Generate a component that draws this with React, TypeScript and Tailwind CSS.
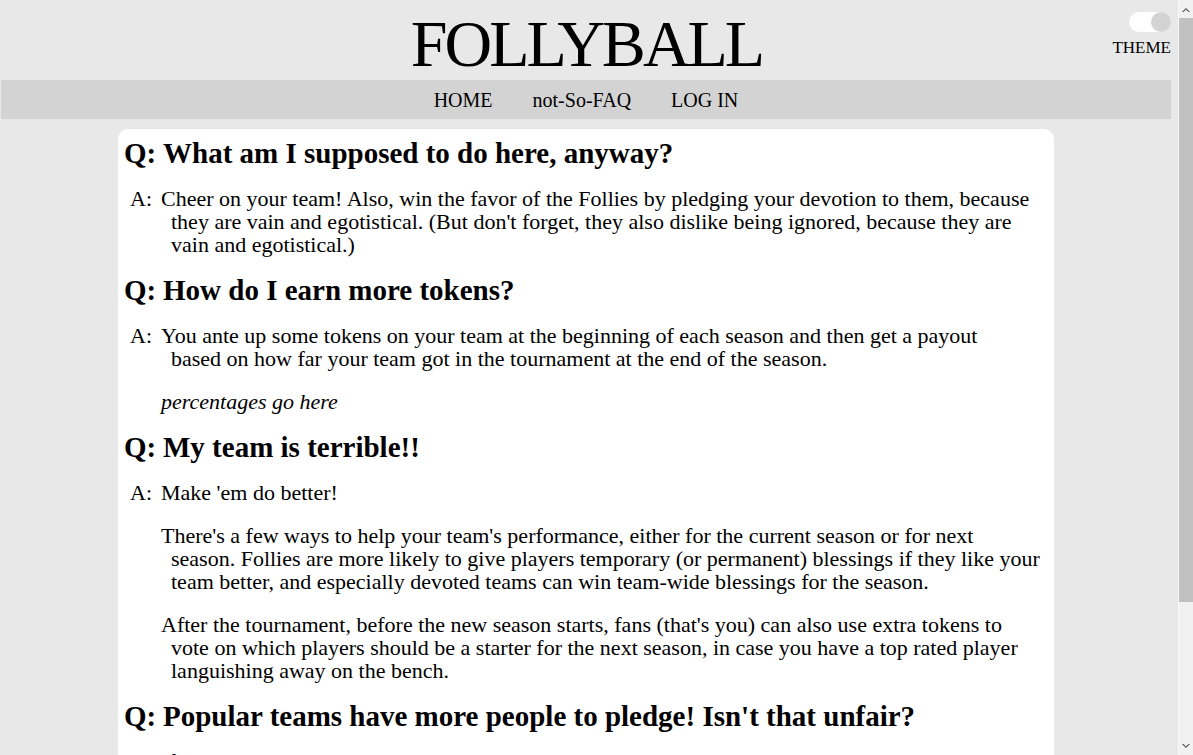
import React from 'react'

// each answer paragraph is a list of lines, broken where the original wraps
const FAQ: { q: string; a: { lines: string[]; italic?: boolean }[] }[] = [
  {
    q: 'What am I supposed to do here, anyway?',
    a: [
      {
        lines: [
          'Cheer on your team! Also, win the favor of the Follies by pledging your devotion to them, because',
          "they are vain and egotistical. (But don't forget, they also dislike being ignored, because they are",
          'vain and egotistical.)',
        ],
      },
    ],
  },
  {
    q: 'How do I earn more tokens?',
    a: [
      {
        lines: [
          'You ante up some tokens on your team at the beginning of each season and then get a payout',
          'based on how far your team got in the tournament at the end of the season.',
        ],
      },
      { lines: ['percentages go here'], italic: true },
    ],
  },
  {
    q: 'My team is terrible!!',
    a: [
      { lines: ["Make 'em do better!"] },
      {
        lines: [
          "There's a few ways to help your team's performance, either for the current season or for next",
          'season. Follies are more likely to give players temporary (or permanent) blessings if they like your',
          'team better, and especially devoted teams can win team-wide blessings for the season.',
        ],
      },
      {
        lines: [
          "After the tournament, before the new season starts, fans (that's you) can also use extra tokens to",
          'vote on which players should be a starter for the next season, in case you have a top rated player',
          'languishing away on the bench.',
        ],
      },
    ],
  },
  {
    q: "Popular teams have more people to pledge! Isn't that unfair?",
    a: [
      {
        lines: [
          "If anything, it's the other way around. The Follies don't count heads, they count devotion, so a",
          'small and passionate fanbase can do just as well as a big and lazy one.',
        ],
      },
    ],
  },
]

function Toggle() {
  return (
    <div className="absolute right-[7px] top-[12px] flex flex-col items-end">
      <div className="w-[42px] h-[20px] rounded-full bg-white flex items-center justify-end">
        <div className="w-[20px] h-[20px] rounded-full bg-[#d3d3d3]" />
      </div>
      <span className="mt-[6px] text-[17px] leading-[20px]">THEME</span>
    </div>
  )
}

function Scrollbar() {
  return (
    <aside className="w-[15px] shrink-0 h-full flex flex-col bg-[#f1f1f1] border-l border-[#f8f8f8]">
      <div className="h-[18px] flex items-center justify-center text-[#505050]">
        <svg width="8" height="5" viewBox="0 0 8 5"><path d="M0 5 L4 1 L8 5 L6.5 5 L4 2.6 L1.5 5 Z" fill="currentColor" /></svg>
      </div>
      <div className="h-[584px] bg-[#c1c1c1]" />
      <div className="flex-1" />
      <div className="h-[18px] flex items-center justify-center text-[#505050]">
        <svg width="8" height="5" viewBox="0 0 8 5"><path d="M0 0 L4 4 L8 0 L6.5 0 L4 2.4 L1.5 0 Z" fill="currentColor" /></svg>
      </div>
    </aside>
  )
}

export default function App() {
  return (
    <div className="h-[755px] flex overflow-hidden bg-[#e8e8e8] text-black font-['Liberation_Serif',serif]">
      <main className="flex-1 overflow-hidden">
        {/* Header */}
        <header className="relative h-[80px]">
          <div className="ml-[1px] w-[1170px] flex justify-center">
            <h1 className="text-[66px] leading-[80px] pt-[4px] pl-[1px] tracking-[-3px]">FOLLYBALL</h1>
          </div>
          <Toggle />
        </header>

        {/* Nav */}
        <nav className="ml-[1px] w-[1170px] h-[39px] bg-[#d3d3d3] flex items-center justify-center gap-[40px] text-[20px]">
          <a>HOME</a>
          <a>not-So-FAQ</a>
          <a>LOG IN</a>
        </nav>

        {/* FAQ card */}
        <div className="ml-[1px] w-[1170px] pt-[10px]">
          <div className="mx-auto w-[936px] bg-white rounded-[10px] pl-[6px] pt-[9px] pb-[20px]">
            {FAQ.map((item, i) => (
              <section key={i} className={i === 0 ? '' : 'mt-[19px]'}>
                <h2 className="flex font-bold text-[29px] leading-[30px]">
                  <span className="w-[39px] shrink-0">Q:</span>
                  <span>{item.q}</span>
                </h2>
                <div className="flex mt-[18px] pt-[1px] text-[22px] leading-[23px]">
                  <span className="w-[37px] pl-[6px] shrink-0">A:</span>
                  <div className="flex-1 flex flex-col gap-[20px]">
                    {item.a.map((p, j) => (
                      <p key={j} className={`pl-[10px] indent-[-10px] whitespace-nowrap ${p.italic ? 'italic' : ''}`}>
                        {p.lines.map((line, k) => (
                          <React.Fragment key={k}>
                            {k > 0 && <br />}
                            {line}
                          </React.Fragment>
                        ))}
                      </p>
                    ))}
                  </div>
                </div>
              </section>
            ))}
          </div>
        </div>
      </main>
      <Scrollbar />
    </div>
  )
}
